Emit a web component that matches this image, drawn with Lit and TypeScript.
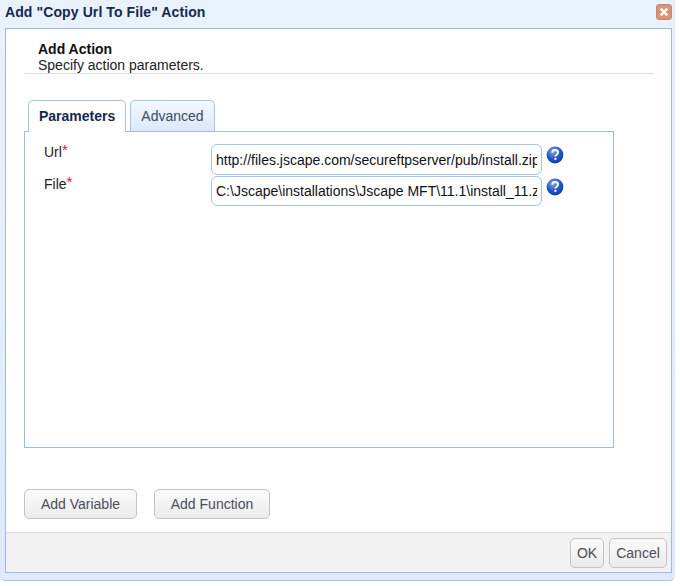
import { LitElement, html, css, svg } from "lit";
import { customElement } from "lit/decorators.js";

const help = (id: string) => html`<svg class="help" width="18" height="18" viewBox="0 0 18 18">
  <defs><radialGradient id=${id} cx="0.4" cy="0.3" r="0.8">
    <stop offset="0" stop-color="#7fa6ec"/><stop offset="0.55" stop-color="#1f58c4"/><stop offset="1" stop-color="#0d3590"/>
  </radialGradient></defs>
  <circle cx="9" cy="9" r="8.4" fill=${`url(#${id})`}/>
  ${svg`<path d="M6.1 6.6C6.3 4.9 7.5 4 9.1 4c1.7 0 2.9 1 2.9 2.4 0 1.1-.6 1.7-1.4 2.3-.8.6-1.1 1-1.1 1.9" fill="none" stroke="#fff" stroke-width="1.8"/>
  <rect x="8.4" y="11.8" width="2" height="2" fill="#fff"/>`}
</svg>`;

@customElement("app-root")
export class AppRoot extends LitElement {
  static styles = css`
    :host { display: block; width: 680px; height: 586px; background: #fff; font-family: "Liberation Sans", Arial, sans-serif; font-size: 14px; color: #222; }
    .win { box-sizing: border-box; width: 675px; height: 581px; display: flex; flex-direction: column; padding: 0 2px 7px 5px;
      background: linear-gradient(#e9f1fd, #e9f1fd 30px, #dfe9fb); border-radius: 0 0 5px 5px; border-bottom: 1px solid #a8c6ee; border-right: 1px solid #dfe9fb; }
    .head { height: 28px; flex: none; display: flex; align-items: center; justify-content: space-between; }
    .title { font-weight: bold; font-size: 14px; color: #15294b; margin: -4px 0 0 0; letter-spacing: 0.1px; }
    .close { width: 16px; height: 16px; margin: -4px 0 0 0; }
    .inner { flex: 1; min-height: 0; display: flex; flex-direction: column; background: #fff; border: 1px solid #99bbe8; }
    .body { flex: 1; min-height: 0; padding: 0 17px 0 18px; display: flex; flex-direction: column; }
    .intro { padding: 12px 0 0 14px; height: 32px; border-bottom: 1px solid #dcdcdc; line-height: 16px; margin-bottom: 26px; }
    .intro b { display: block; color: #111; }
    .tabs { display: flex; gap: 4px; padding-left: 4px; height: 31px; position: relative; z-index: 1; }
    .tab { box-sizing: border-box; padding: 7px 10px 0; height: 31px; border: 1px solid #a6c4ea; border-bottom: none; border-radius: 5px 5px 0 0;
      background: linear-gradient(#f4f8fe, #dbe7fa); color: #3b4a63; width: 85px; text-align: center; }
    .tab.on { background: #fff; height: 32px; width: 98px; font-weight: bold; color: #15294b; }
    .panel { box-sizing: border-box; width: 590px; height: 317px; border: 1px solid #99bbe8; padding: 12px 0 0 19px; }
    .row { display: grid; grid-template-columns: 167px 331px auto; height: 32px; }
    .row label { line-height: 16px; color: #222; }
    .row label i { color: #e0103a; font-style: normal; font-size: 15px; position: relative; top: -2px; }
    .row input { box-sizing: border-box; width: 331px; height: 30px; border: 1px solid #a6c4ea; border-radius: 6px; padding: 0 4px; font: 14px "Liberation Sans", Arial, sans-serif; color: #111; outline: none; background: #fff; }
    .help { margin: 2px 0 0 4px; display: block; }
    .row:first-child input { height: 31px; }
    .tools { display: flex; gap: 17px; margin-top: 41px; }
    .btn { box-sizing: border-box; height: 30px; border: 1px solid #c2c2c2; border-radius: 5px; background: linear-gradient(#fbfbfb, #ebebeb); color: #4a4f58; font: 14px "Liberation Sans", Arial, sans-serif; padding: 0; }
    .foot { flex: none; height: 40px; box-sizing: border-box; background: #f2f2f2; border-top: 1px solid #dcdcdc; display: flex; justify-content: flex-end; align-items: flex-start; gap: 5px; padding: 5px 4px 0 0; }
  `;

  render() {
    return html`<div class="win">
      <div class="head">
        <div class="title">Add "Copy Url To File" Action</div>
        <svg class="close" viewBox="0 0 16 16">
          <rect x="0.5" y="0.5" width="15" height="15" rx="2.5" fill="#df8f72" stroke="#b98d79"/>
          <path d="M4.7 4.7l6.6 6.6M11.3 4.7l-6.6 6.6" stroke="#fff" stroke-width="2.6"/>
        </svg>
      </div>
      <div class="inner">
        <div class="body">
          <div class="intro"><b>Add Action</b>Specify action parameters.</div>
          <div class="tabs"><div class="tab on">Parameters</div><div class="tab">Advanced</div></div>
          <div class="panel">
            <div class="row"><label>Url<i>*</i></label><input value="http://files.jscape.com/secureftpserver/pub/install.zip" />${help("h1")}</div>
            <div class="row"><label>File<i>*</i></label><input value="C:\\Jscape\\installations\\Jscape MFT\\11.1\\install_11.zip" />${help("h2")}</div>
          </div>
          <div class="tools">
            <button class="btn" style="width:113px">Add Variable</button>
            <button class="btn" style="width:116px">Add Function</button>
          </div>
        </div>
        <div class="foot">
          <button class="btn" style="width:34px">OK</button>
          <button class="btn" style="width:58px">Cancel</button>
        </div>
      </div>
    </div>`;
  }
}
